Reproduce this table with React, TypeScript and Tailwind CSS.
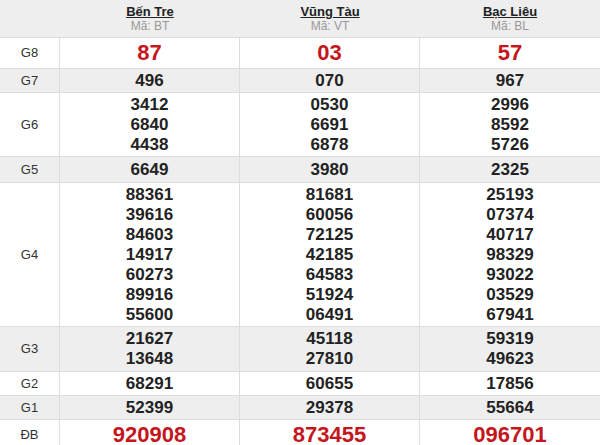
const provinces = [
  { name: 'Bến Tre', code: 'BT' },
  { name: 'Vũng Tàu', code: 'VT' },
  { name: 'Bạc Liêu', code: 'BL' },
];

// h = row height including its bottom border
const prizes: { label: string; h: string; big?: boolean; values: string[][] }[] = [
  { label: 'G8', h: 'h-[31px]', big: true, values: [['87'], ['03'], ['57']] },
  { label: 'G7', h: 'h-[24px]', values: [['496'], ['070'], ['967']] },
  {
    label: 'G6',
    h: 'h-[64px]',
    values: [
      ['3412', '6840', '4438'],
      ['0530', '6691', '6878'],
      ['2996', '8592', '5726'],
    ],
  },
  { label: 'G5', h: 'h-[26px]', values: [['6649'], ['3980'], ['2325']] },
  {
    label: 'G4',
    h: 'h-[144px]',
    values: [
      ['88361', '39616', '84603', '14917', '60273', '89916', '55600'],
      ['81681', '60056', '72125', '42185', '64583', '51924', '06491'],
      ['25193', '07374', '40717', '98329', '93022', '03529', '67941'],
    ],
  },
  {
    label: 'G3',
    h: 'h-[45px]',
    values: [
      ['21627', '13648'],
      ['45118', '27810'],
      ['59319', '49623'],
    ],
  },
  { label: 'G2', h: 'h-[24px]', values: [['68291'], ['60655'], ['17856']] },
  { label: 'G1', h: 'h-[24px]', values: [['52399'], ['29378'], ['55664']] },
  { label: 'ĐB', h: 'h-[31px]', big: true, values: [['920908'], ['873455'], ['096701']] },
];

export default function App() {
  return (
    <div className="w-[600px] h-[445px] overflow-hidden bg-white font-['Liberation_Sans',Arial,sans-serif] text-[#222]">
      {/* Header */}
      <div className="grid grid-cols-[60px_180px_180px_180px] h-[38px] bg-[#eeeeee] border-b border-[#dddddd]">
        <div />
        {provinces.map((p) => (
          <div key={p.code} className="flex flex-col items-center justify-center pt-[1px]">
            <span className="text-[13px] leading-[14px] font-bold underline text-[#222]">{p.name}</span>
            <span className="text-[12px] leading-[14px] text-[#999]">Mã: {p.code}</span>
          </div>
        ))}
      </div>

      {prizes.map((row, i) => (
        <div
          key={row.label}
          className={`grid grid-cols-[60px_180px_180px_180px] box-border border-b border-[#dddddd] ${row.h} ${
            i % 2 === 1 ? 'bg-[#eeeeee]' : 'bg-white'
          }`}
        >
          <div className="flex items-center justify-center text-[13px] text-[#333] border-r border-[#dddddd]">
            {row.label}
          </div>
          {row.values.map((col, j) => (
            <div
              key={j}
              className={`flex flex-col items-center justify-center ${j < 2 ? 'border-r border-[#dddddd]' : ''}`}
            >
              {col.map((v) => (
                <span
                  key={v}
                  className={
                    row.big
                      ? 'text-[22px] leading-[24px] font-bold text-[#c4161c]'
                      : 'text-[17px] leading-[20px] font-bold text-[#222]'
                  }
                >
                  {v}
                </span>
              ))}
            </div>
          ))}
        </div>
      ))}
    </div>
  );
}
